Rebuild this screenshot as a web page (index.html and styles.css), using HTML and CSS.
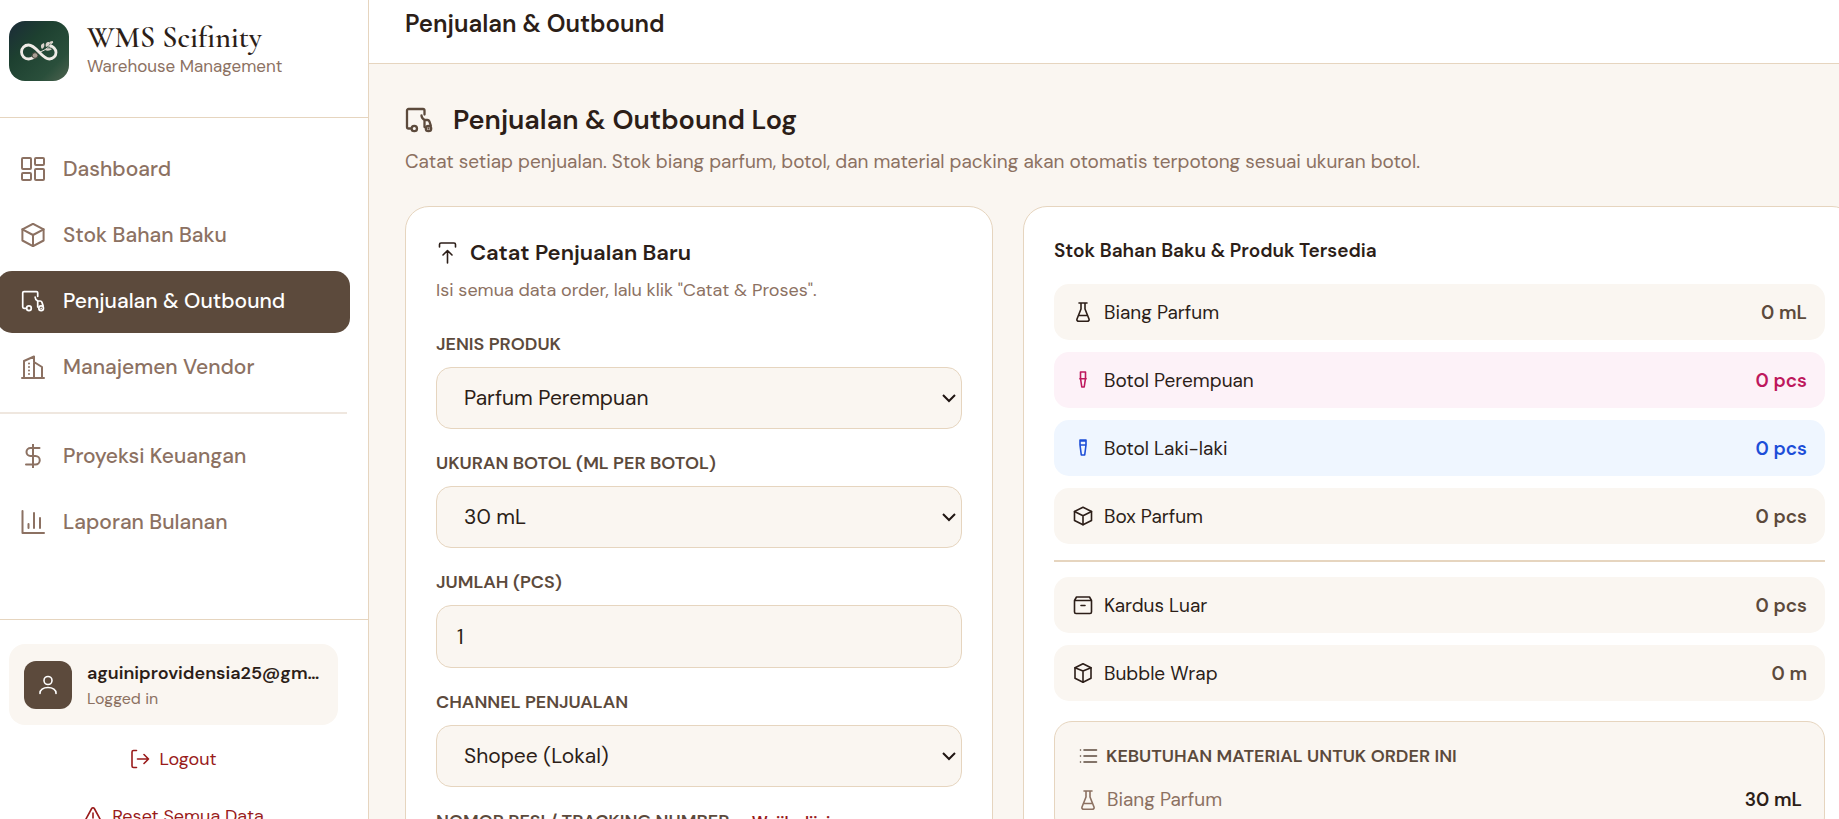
FILE: index.html
```html
<!DOCTYPE html>
<html lang="id">
<head>
<meta charset="utf-8">
<meta name="viewport" content="width=device-width, initial-scale=1">
<title>Penjualan &amp; Outbound – WMS Scifinity</title>
<link rel="stylesheet" href="styles.css">
</head>
<body>
<svg class="sprite" aria-hidden="true">
  <symbol id="i-truck" viewBox="0 0 28 28"><path d="M5.500 22.500H3.500A1.500 1.500 0 0 1 2 21V4.500A1.500 1.500 0 0 1 3.500 3H18a1.500 1.500 0 0 1 1.500 1.500v4"/><path d="M16.500 9.500c0 2.500 1.500 3.500 3 4.500M19.500 21V14h3a2 2 0 0 1 1.800 1.200l1.500 4.500"/><circle cx="9.300" cy="22.500" r="2.700"/><circle cx="23.500" cy="22.500" r="2.700"/><path d="M23.500 22.500v.010"/></symbol>
  <symbol id="i-dash" viewBox="0 0 24 24"><rect x="1" y="1" width="9" height="11" rx="1"/><rect x="14" y="1" width="9" height="7" rx="1"/><rect x="14" y="12" width="9" height="11" rx="1"/><rect x="1" y="16" width="9" height="7" rx="1"/></symbol>
  <symbol id="i-box" viewBox="0 0 24 24"><path d="M12 .800L22.600 6.300V17.500L12 23.200 1.400 17.500V6.300z"/><path d="M1.400 6.300L12 12l10.600-5.700M12 12v11"/></symbol>
  <symbol id="i-cube" viewBox="0 0 20 20"><path d="M10 .800l8 4v10.400l-8 4-8-4V4.800z"/><path d="M2 4.800l8 3.200 8-3.200M10 8v11.200"/></symbol>
  <symbol id="i-package" viewBox="0 0 20 20"><path d="M10 1.200l8.500 4.300v9L10 18.800l-8.500-4.300v-9z"/><path d="M1.500 5.500L10 9.800l8.500-4.300M10 9.800v9"/></symbol>
  <symbol id="i-city" viewBox="0 0 24 24"><path d="M1 23h22M3 23V6l10-4.500V23M13 7l8 5V23"/><path d="M8 8.500v.01M8 12v.01M8 15.500v.01M8 19v.01" stroke-width="2"/></symbol>
  <symbol id="i-dollar" viewBox="0 0 24 24"><path d="M18.500 4H9.500a4 4 0 0 0 0 8h5a4 4 0 0 1 0 8.500H5M12 .500v23"/></symbol>
  <symbol id="i-chart" viewBox="0 0 24 24"><path d="M1.500 1v22H23M7.500 14v4M13 3v15M19 8v10"/></symbol>
  <symbol id="i-user" viewBox="0 0 20 20"><circle cx="10" cy="5.500" r="4"/><path d="M2 18.500v-.500c0-3 3-5.500 8-5.500s8 2.500 8 5.500v.500"/></symbol>
  <symbol id="i-logout" viewBox="0 0 20 20"><path d="M6.500 1.500H3.500A1.500 1.500 0 0 0 2 3v14a1.500 1.500 0 0 0 1.500 1.500h3M7.500 10H18.500M14 5.500l4.500 4.500-4.500 4.500"/></symbol>
  <symbol id="i-warn" viewBox="0 0 20 20"><path d="M8.700 2.500L1.500 15.700A1.500 1.500 0 0 0 2.800 18h14.400a1.500 1.500 0 0 0 1.300-2.300L11.300 2.500a1.500 1.500 0 0 0-2.600 0zM10 7v5M10 15v.010"/></symbol>
  <symbol id="i-up" viewBox="0 0 24 24"><path d="M3.500 6V3.500A1.500 1.500 0 0 1 5 2h13a1.500 1.500 0 0 1 1.500 1.500V6M11.500 22V9.500M7 14l4.500-4.500L16 14"/></symbol>
  <symbol id="i-flask" viewBox="0 0 20 20"><path d="M6 1h8M8 1v6L4 17a1.700 1.700 0 0 0 1.500 2.300h9A1.700 1.700 0 0 0 16 17L12 7V1M5.300 13.500h9.400"/></symbol>
  <symbol id="i-tube" viewBox="0 0 20 20"><path d="M7.500 2h5v6.500l-1.300 8.500H8.800L7.500 8.500zM6.800 8.800h6.400"/></symbol>
  <symbol id="i-tube2" viewBox="0 0 20 20"><path d="M7 2h6v5l-1.300 10H8.300L7 7zM7 3h6M7 7h6"/></symbol>
  <symbol id="i-archive" viewBox="0 0 20 20"><path d="M1.500 5.500h17V17a1.500 1.500 0 0 1-1.500 1.500H3A1.500 1.500 0 0 1 1.500 17zM1.500 5.500L3.500 2h13l2 3.500M8 10.500h4"/></symbol>
  <symbol id="i-list" viewBox="0 0 20 20"><path d="M6 4h12.500M6 10h12.500M6 16h12.500M2.500 4v.010M2.500 10v.010M2.500 16v.010"/></symbol>
</svg>

<div class="app">
  <aside class="sidebar">
    <div class="brand">
      <svg class="brand-logo" viewBox="0 0 60 60" role="img" aria-label="Scifinity">
        <defs><linearGradient id="lg" x1="0" y1="0" x2="1" y2="1"><stop offset="0" stop-color="#1b2a38"/><stop offset=".35" stop-color="#1d4030"/><stop offset=".75" stop-color="#2a4f3b"/><stop offset="1" stop-color="#4f6350"/></linearGradient></defs>
        <rect width="60" height="60" rx="16" fill="url(#lg)"/>
        <path d="M28 33.500c-3 3-5.500 4.500-8.500 4.500a7 7 0 0 1 0-14c8 0 13 14 21 14a6.500 6.500 0 0 0 0-13" fill="none" stroke="#efebe6" stroke-width="2.800"/>
        <path d="M31 31c6-2 9-5 13-10" fill="none" stroke="#e6e1da"/>
        <path d="M33 28c-2-3-1-5 2-6 1 3 0 5-2 6zM37 26c-1-3 0-5 3-5 1 3 0 4-3 5zM40 23c0-2 1-3 4-3 0 2-1 3-4 3zM36 29c2-2 5-2 7-1-2 2-5 2-7 1z" fill="#d8d2ca"/>
        <circle cx="26" cy="34.500" r="2.800" fill="#a89f94" stroke="#4a4a40"/>
      </svg>
      <div class="brand-text">
        <div class="brand-name">WMS Scifinity</div>
        <div class="brand-sub">Warehouse Management</div>
      </div>
    </div>
    <nav class="nav">
      <a class="nav-item" href="#"><svg class="icon"><use href="#i-dash"/></svg>Dashboard</a>
      <a class="nav-item" href="#"><svg class="icon"><use href="#i-box"/></svg>Stok Bahan Baku</a>
      <a class="nav-item active" href="#" aria-current="page"><svg class="icon"><use href="#i-truck"/></svg>Penjualan &amp; Outbound</a>
      <a class="nav-item" href="#"><svg class="icon"><use href="#i-city"/></svg>Manajemen Vendor</a>
      <hr class="nav-divider">
      <a class="nav-item" href="#"><svg class="icon"><use href="#i-dollar"/></svg>Proyeksi Keuangan</a>
      <a class="nav-item" href="#"><svg class="icon"><use href="#i-chart"/></svg>Laporan Bulanan</a>
    </nav>
    <div class="account">
      <div class="user">
        <div class="avatar"><svg class="icon small"><use href="#i-user"/></svg></div>
        <div class="user-text">
          <div class="user-mail">aguiniprovidensia25@gmail.com</div>
          <div class="user-state">Logged in</div>
        </div>
      </div>
      <button class="danger" type="button"><svg class="icon small"><use href="#i-logout"/></svg>Logout</button>
      <button class="danger" type="button"><svg class="icon small"><use href="#i-warn"/></svg>Reset Semua Data</button>
    </div>
  </aside>

  <main class="main">
    <header class="topbar">Penjualan &amp; Outbound</header>
    <div class="content">
      <h1 class="page-title"><svg class="icon large"><use href="#i-truck"/></svg>Penjualan &amp; Outbound Log</h1>
      <p class="page-sub">Catat setiap penjualan. Stok biang parfum, botol, dan material packing akan otomatis terpotong sesuai ukuran botol.</p>
      <div class="columns">
        <form class="card">
          <h2 class="card-title"><svg class="icon thin"><use href="#i-up"/></svg>Catat Penjualan Baru</h2>
          <p class="card-sub">Isi semua data order, lalu klik "Catat &amp; Proses".</p>
          <div class="field">
            <label for="produk">JENIS PRODUK</label>
            <div class="select"><select id="produk"><option>Parfum Perempuan</option><option>Parfum Laki-laki</option></select><svg class="chevron" viewBox="0 0 16 16"><path d="M2 5l6 6 6-6"/></svg></div>
          </div>
          <div class="field">
            <label for="ukuran">UKURAN BOTOL (ML PER BOTOL)</label>
            <div class="select"><select id="ukuran"><option>30 mL</option><option>50 mL</option></select><svg class="chevron" viewBox="0 0 16 16"><path d="M2 5l6 6 6-6"/></svg></div>
          </div>
          <div class="field">
            <label for="jumlah">JUMLAH (PCS)</label>
            <input id="jumlah" type="text" inputmode="numeric" value="1">
          </div>
          <div class="field">
            <label for="channel">CHANNEL PENJUALAN</label>
            <div class="select"><select id="channel"><option>Shopee (Lokal)</option></select><svg class="chevron" viewBox="0 0 16 16"><path d="M2 5l6 6 6-6"/></svg></div>
          </div>
          <div class="field">
            <label for="resi">NOMOR RESI / TRACKING NUMBER <span class="required">Wajib diisi</span></label>
            <input id="resi" type="text">
          </div>
        </form>

        <section class="card">
          <h2 class="stock-title">Stok Bahan Baku &amp; Produk Tersedia</h2>
          <div class="stock">
            <div class="stock-row"><svg class="icon small"><use href="#i-flask"/></svg><span>Biang Parfum</span><b>0 mL</b></div>
            <div class="stock-row pink"><svg class="icon small"><use href="#i-tube"/></svg><span>Botol Perempuan</span><b>0 pcs</b></div>
            <div class="stock-row blue"><svg class="icon small"><use href="#i-tube2"/></svg><span>Botol Laki-laki</span><b>0 pcs</b></div>
            <div class="stock-row"><svg class="icon small"><use href="#i-package"/></svg><span>Box Parfum</span><b>0 pcs</b></div>
            <hr class="stock-divider">
            <div class="stock-row"><svg class="icon small"><use href="#i-archive"/></svg><span>Kardus Luar</span><b>0 pcs</b></div>
            <div class="stock-row"><svg class="icon small"><use href="#i-cube"/></svg><span>Bubble Wrap</span><b>0 m</b></div>
          </div>
          <div class="needs">
            <h3 class="needs-title"><svg class="icon small"><use href="#i-list"/></svg>KEBUTUHAN MATERIAL UNTUK ORDER INI</h3>
            <div class="needs-row"><svg class="icon small"><use href="#i-flask"/></svg><span>Biang Parfum</span><b>30 mL</b></div>
          </div>
        </section>
      </div>
    </div>
  </main>
</div>
</body>
</html>
```
FILE: styles.css
```css
* { box-sizing: border-box; }
html, body { height: 100%; }
body {
  margin: 0;
  overflow: hidden;
  background: #faf6f1;
  color: #2c1e18;
  font-family: "DM Sans", Inter, "Liberation Sans", sans-serif;
  font-size: 19px;
}
h1, h2, h3 { margin: 0; font-weight: 600; }
p { margin: 0; }
hr { border: 0; margin: 0; }
.sprite { display: none; }
.icon {
  flex: none;
  width: 24px;
  height: 24px;
  fill: none;
  stroke: currentColor;
  stroke-width: 2;
  stroke-linecap: round;
  stroke-linejoin: round;
  overflow: visible;
}
.icon.small { width: 20px; height: 20px; stroke-width: 1.6; }
.icon.large { width: 28px; height: 28px; stroke-width: 2.3; }
.icon.thin { stroke-width: 1.6; }

.app { display: flex; height: 100vh; }
.sidebar {
  flex: none;
  display: flex;
  flex-direction: column;
  width: 369px;
  background: #fff;
  border-right: 1px solid #e6d5bf;
  overflow: hidden;
}
.brand {
  display: flex;
  gap: 18px;
  height: 118px;
  flex: none;
  padding: 21px 9px 0;
  border-bottom: 1px solid #e6d5bf;
}
.brand-logo { width: 60px; height: 60px; }
.brand-name { font: 600 30px/34px "Cormorant Garamond", "Liberation Serif", serif; }
.brand-sub { font-size: 17px; line-height: 22px; color: #8c7162; }

.nav {
  flex: 1;
  display: flex;
  flex-direction: column;
  gap: 4px;
  margin-left: -3px;
  padding: 21px 18px 0 0;
}
.nav-item {
  display: flex;
  align-items: center;
  gap: 18px;
  height: 62px;
  padding: 0 0 2px 24px;
  border-radius: 15px;
  color: #8c7162;
  font-size: 21px;
  font-weight: 500;
  text-decoration: none;
}
.nav-item.active { background: #5c4a3c; color: #fff; }
.nav-divider { height: 2px; margin: 9px 3px 8px 0; background: #efe7df; }

.account {
  flex: none;
  height: 200px;
  padding: 24px 30px 0 9px;
  border-top: 1px solid #e6d5bf;
}
.user {
  display: flex;
  align-items: center;
  gap: 15px;
  height: 81px;
  padding: 0 15px;
  border-radius: 16px;
  background: #faf6f1;
}
.avatar {
  flex: none;
  display: grid;
  place-items: center;
  width: 48px;
  height: 48px;
  border-radius: 12px;
  background: #5c4a3c;
  color: #fff;
}
.user-text { min-width: 0; }
.user-mail {
  overflow: hidden;
  text-overflow: ellipsis;
  white-space: nowrap;
  font-size: 18px;
  font-weight: 600;
  line-height: 28px;
}
.user-state { font-size: 16px; line-height: 24px; color: #8c7162; }
.danger {
  display: flex;
  align-items: center;
  justify-content: center;
  gap: 9px;
  width: 100%;
  height: 57px;
  padding: 0;
  border: 0;
  background: none;
  color: #991b1b;
  font-family: inherit;
  font-size: 18px;
}
.user + .danger { margin-top: 5px; }

.main { flex: 1; min-width: 0; }
.topbar {
  height: 64px;
  padding: 8px 36px;
  border-bottom: 1px solid #e6d5bf;
  background: #fff;
  font-size: 24px;
  font-weight: 600;
  line-height: 32px;
}
/* The column grid runs slightly past the viewport edge. */
.content { margin-right: -17px; padding: 36px 0 0 36px; }
.page-title {
  display: flex;
  align-items: center;
  gap: 20px;
  font-size: 27px;
  line-height: 40px;
}
.page-title .icon { color: #5c4a3c; }
.page-sub { margin-top: 6px; line-height: 32px; color: #8c7162; }
.columns {
  display: grid;
  grid-template-columns: 588fr 833fr;
  gap: 30px;
  margin-top: 28px;
}
.card {
  min-width: 0;
  padding: 30px;
  border: 1px solid #e6d5bf;
  border-radius: 24px;
  background: #fff;
}
.card-title { display: flex; align-items: center; gap: 10px; font-size: 22px; line-height: 32px; }
.card-sub { margin-top: 8px; font-size: 18px; line-height: 26px; color: #8c7162; }
.field { margin-top: 20px; }
.card-sub + .field { margin-top: 27px; }
.field label {
  display: block;
  margin-bottom: 9px;
  font-size: 18px;
  font-weight: 600;
  line-height: 28px;
  color: #5c4a3c;
}
.required { margin-left: 18px; color: #991b1b; font-size: 16px; font-weight: 600; }
.select { display: grid; align-items: center; }
.select > * { grid-area: 1 / 1; }
.field select, .field input {
  display: block;
  width: 100%;
  height: 62px;
  padding: 0 20px;
  border: 1px solid #e6d5bf;
  border-radius: 15px;
  background: #faf6f1;
  color: #2c1e18;
  font-family: inherit;
  font-size: 21px;
}
.field input { height: 63px; }
.field select { appearance: none; padding-left: 27px; }
.chevron {
  justify-self: end;
  width: 16px;
  height: 16px;
  margin-right: 5px;
  fill: none;
  stroke: #1f1512;
  stroke-width: 2;
  pointer-events: none;
}

.stock-title { font-size: 19px; line-height: 28px; }
.stock { display: flex; flex-direction: column; gap: 12px; margin-top: 19px; }
.stock-row {
  display: flex;
  align-items: center;
  gap: 11px;
  height: 56px;
  padding: 0 18px 0 19px;
  border-radius: 15px;
  background: #faf6f1;
}
.stock-row b, .needs-row b { margin-left: auto; font-weight: 600; }
.stock-row b { color: #5c4a3c; }
.stock-row.pink { background: #fdf2f8; }
.pink .icon, .pink b { color: #be185d; }
.stock-row.blue { background: #eff6ff; }
.blue .icon, .blue b { color: #1d4ed8; }
.stock-divider { height: 2px; margin: 4px 0 3px; background: #e6d5bf; }
.needs {
  margin-top: 20px;
  padding: 20px 22px 20px 23px;
  border: 1px solid #e6d5bf;
  border-radius: 18px;
  background: #faf6f1;
}
.needs-title {
  display: flex;
  align-items: center;
  gap: 8px;
  font-size: 18px;
  line-height: 28px;
  color: #5c4a3c;
}
.needs-row { display: flex; align-items: center; gap: 9px; margin-top: 16px; line-height: 28px; color: #8c7162; }
.needs-row b { color: #2c1e18; }
```
